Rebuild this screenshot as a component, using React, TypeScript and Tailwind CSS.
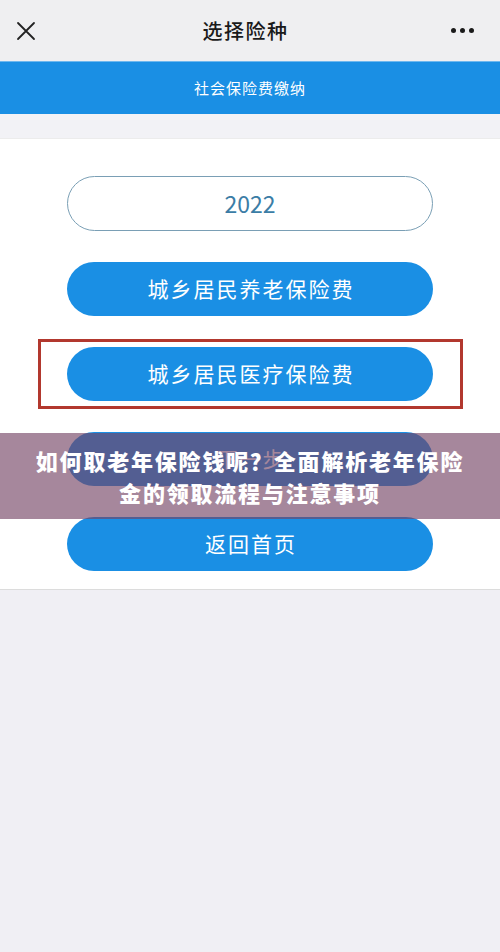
const cjk = { fontFamily: '"Noto Sans CJK SC", "Noto Sans", sans-serif' };

const buttons = ['城乡居民养老保险费', '城乡居民医疗保险费', '下一步', '返回首页'];

function App() {
    return (
        <div className="relative w-[500px] h-[952px] bg-[#f0eff4] overflow-hidden" style={cjk}>
            {/* nav bar */}
            <div className="h-[61px] bg-[#efeff1] flex items-center justify-between px-4">
                <svg width="20" height="20" viewBox="0 0 20 20">
                    <path d="M2 2 L18 18 M18 2 L2 18" stroke="#222" strokeWidth="1.8" strokeLinecap="round" />
                </svg>
                <div className="text-[20px] font-medium text-[#1a1a1a] tracking-[1.5px] pl-[4px]">选择险种</div>
                <div className="flex gap-[4px] mr-[10px]">
                    <span className="w-[5px] h-[5px] rounded-full bg-[#1a1a1a]" />
                    <span className="w-[5px] h-[5px] rounded-full bg-[#1a1a1a]" />
                    <span className="w-[5px] h-[5px] rounded-full bg-[#1a1a1a]" />
                </div>
            </div>

            {/* banner */}
            <div className="h-[53px] bg-[#1a8fe4] border-t border-[#6fb8ee] flex items-center justify-center text-white text-[15px] tracking-[1px]">
                社会保险费缴纳
            </div>

            <div className="h-[24px] bg-[#f2f2f6]" />

            {/* content */}
            <div className="bg-white border-t border-[#ececec] border-b border-b-[#dcdcdc] pt-[37px] pb-[18px] flex flex-col items-center gap-[31px]">
                <div className="w-[366px] h-[55px] rounded-full border border-[#7a9fb5] flex items-center justify-center text-[23px] text-[#3b7da6]">
                    2022
                </div>
                {buttons.map((label, i) =>
                    i === 1 ? (
                        <div key={i} className="w-[425px] h-[70px] -my-[8px] border-[3px] border-[#b2382e] flex items-center justify-center">
                            <div className="w-[366px] h-[54px] rounded-full bg-[#1a8fe4] flex items-center justify-center text-white text-[21px] tracking-[2px] pl-[2px]">
                                {label}
                            </div>
                        </div>
                    ) : (
                        <div key={i} className="w-[366px] h-[54px] rounded-full bg-[#1a8fe4] flex items-center justify-center text-white text-[21px] tracking-[2px] pl-[2px]">
                            {label}
                        </div>
                    )
                )}
            </div>

            {/* overlay title */}
            <div className="absolute left-0 top-[433px] w-[500px] h-[86px] bg-[rgba(116,67,100,0.64)] flex items-center justify-center">
                <div className="w-[440px] text-white text-[22px] font-black leading-[32px] text-center tracking-[1.8px]">
                    如何取老年保险钱呢？全面解析老年保险金的领取流程与注意事项
                </div>
            </div>
        </div>
    );
}

export default App;
